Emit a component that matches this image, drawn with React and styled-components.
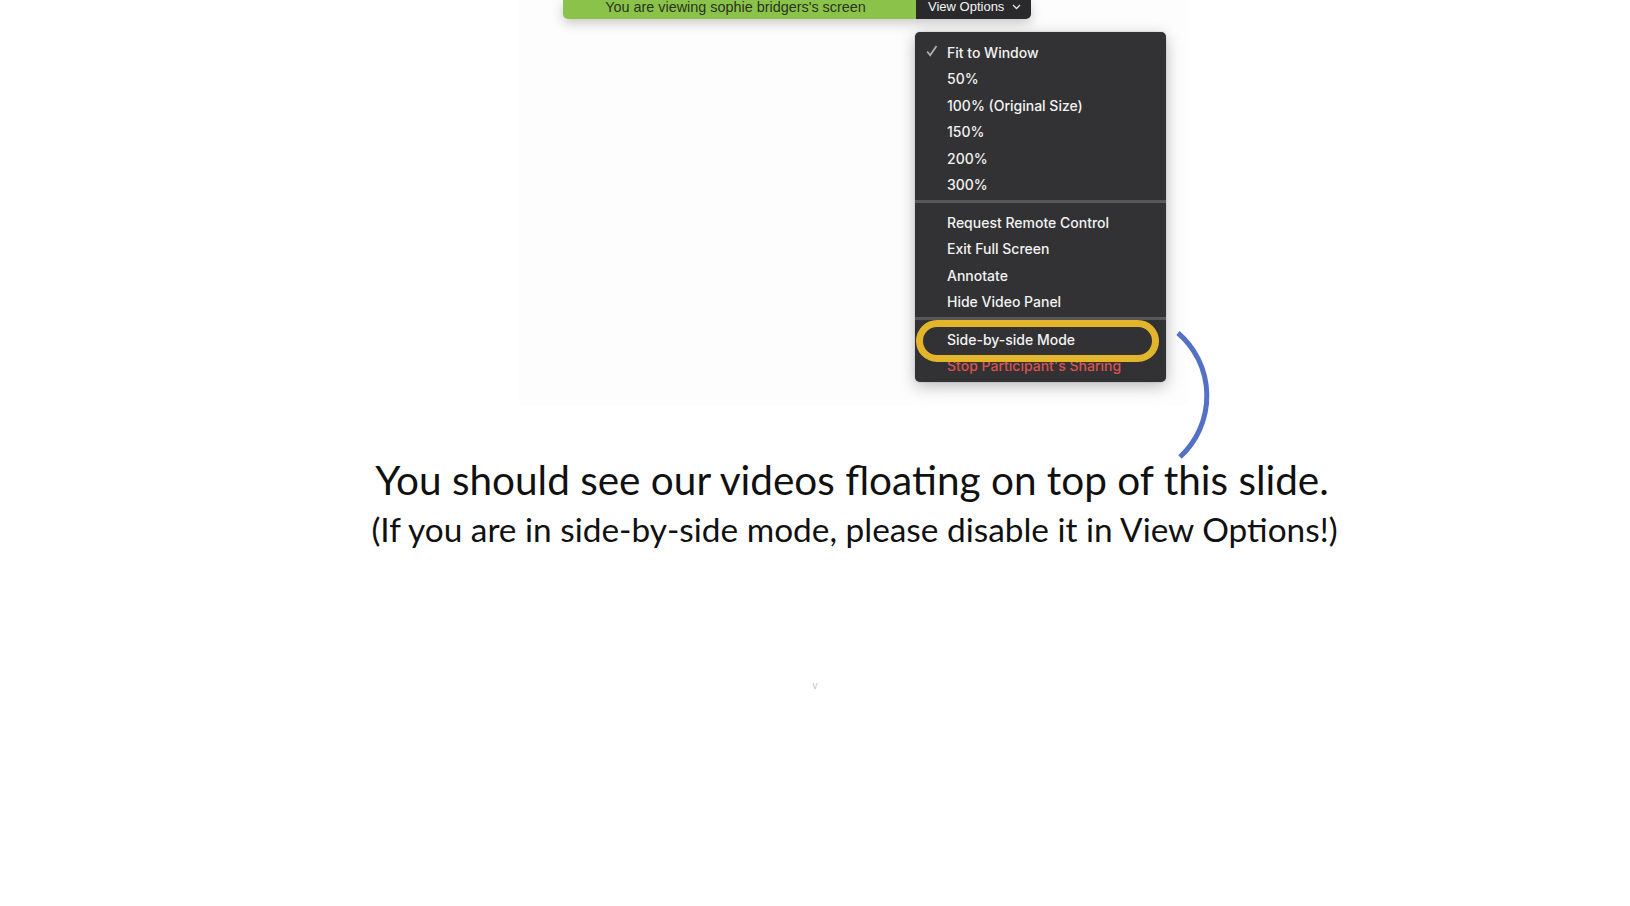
import React from 'react';
import styled, { createGlobalStyle } from 'styled-components';

const GlobalStyle = createGlobalStyle`
  html, body {
    margin: 0;
    padding: 0;
    background: #ffffff;
  }
`;

const Page = styled.div`
  position: relative;
  width: 1630px;
  height: 906px;
  overflow: hidden;
  background: #ffffff;
`;

const ShareWindow = styled.div`
  position: relative;
  margin-left: 519px;
  width: 669px;
  height: 405px;
  background: #fdfdfd;
`;

const Toolbar = styled.div`
  display: flex;
  margin-left: 44px;
  width: 468px;
  height: 19px;
  border-radius: 0 0 5px 5px;
  overflow: hidden;
  box-shadow: 0 4px 12px rgba(0, 0, 0, 0.22);
  font-family: "Liberation Sans", Arial, sans-serif;
`;

const Status = styled.div`
  display: flex;
  align-items: flex-end;
  justify-content: center;
  width: 353px;
  padding: 0 8px 5px 0;
  box-sizing: border-box;
  background: #8bc34a;
  color: #29331f;
  font-size: 14.4px;
  line-height: 14px;
  white-space: nowrap;
`;

const ViewButton = styled.div`
  display: flex;
  align-items: flex-end;
  gap: 8px;
  flex: 1;
  padding: 0 0 5px 12px;
  background: #2a2a2c;
  color: #f4f4f4;
  font-size: 13px;
  line-height: 14px;
  white-space: nowrap;
  svg {
    margin-bottom: 4px;
  }
`;

const Menu = styled.div`
  position: absolute;
  left: 396px;
  top: 32px;
  width: 251px;
  height: 350px;
  box-sizing: border-box;
  padding: 8px 0 3px;
  background: #323234;
  border-radius: 5px;
  box-shadow: 0 4px 16px rgba(0, 0, 0, 0.28), 0 0 1px rgba(0, 0, 0, 0.5);
  font-family: "Inter", "Liberation Sans", Arial, sans-serif;
`;

const Item = styled.div`
  position: relative;
  height: 26.4px;
  padding-left: 32px;
  line-height: 26.4px;
  font-size: 14px;
  font-weight: 500;
  color: ${(p) => (p.$danger ? '#d9534f' : '#f3f3f3')};
  white-space: nowrap;
`;

const Check = styled.svg`
  position: absolute;
  left: 11px;
  top: 5px;
`;

const Separator = styled.div`
  height: 3px;
  margin: 1.5px 0 7px;
  background: #58585b;
`;

const Highlight = styled.div`
  position: absolute;
  left: 1px;
  top: 288px;
  width: 243px;
  height: 42px;
  box-sizing: border-box;
  border: 7.5px solid #e3b52c;
  border-radius: 21px;
  pointer-events: none;
`;

const Arc = styled.svg`
  position: absolute;
  left: 1165px;
  top: 325px;
`;

const Slide = styled.section`
  padding-left: 74px;
  text-align: center;
  font-family: "Lato", "Noto Sans", sans-serif;
  color: #111111;
`;

const Headline = styled.div`
  margin-top: 51.3px;
  font-size: 40.5px;
  line-height: 48px;
`;

const Subline = styled.div`
  margin-top: 1.8px;
  padding-left: 5px;
  font-size: 33.4px;
  line-height: 46px;
`;

const ScrollHint = styled.div`
  margin-top: 129px;
  text-align: center;
  font-family: "Liberation Sans", Arial, sans-serif;
  font-size: 10px;
  line-height: 10px;
  color: #c4c4c4;
`;

const zoomItems = ['Fit to Window', '50%', '100% (Original Size)', '150%', '200%', '300%'];
const actionItems = ['Request Remote Control', 'Exit Full Screen', 'Annotate', 'Hide Video Panel'];

export default function App() {
  return (
    <Page>
      <GlobalStyle />
      <ShareWindow>
        <Toolbar>
          <Status>You are viewing sophie bridgers's screen</Status>
          <ViewButton>
            View Options
            <svg width="9" height="6" viewBox="0 0 9 6">
              <path d="M1 1 L4.5 4.5 L8 1" fill="none" stroke="#e6e6e6" strokeWidth="1.3" />
            </svg>
          </ViewButton>
        </Toolbar>
        <Menu>
          {zoomItems.map((label, i) => (
            <Item key={label}>
              {i === 0 && (
                <Check width="12" height="12" viewBox="0 0 12 12">
                  <path d="M1.2 6.5 L4.2 10.2 L10.5 1" fill="none" stroke="#b0b0b0" strokeWidth="1.8" />
                </Check>
              )}
              {label}
            </Item>
          ))}
          <Separator />
          {actionItems.map((label) => (
            <Item key={label}>{label}</Item>
          ))}
          <Separator />
          <Item>Side-by-side Mode</Item>
          <Item $danger>Stop Participant's Sharing</Item>
          <Highlight />
        </Menu>
      </ShareWindow>
      <Arc width="50" height="140" viewBox="0 0 50 140">
        <path d="M13 8 A 83 83 0 0 1 15 132" fill="none" stroke="#5571c5" strokeWidth="5" />
      </Arc>
      <Slide>
        <Headline>You should see our videos floating on top of this slide.</Headline>
        <Subline>(If you are in side-by-side mode, please disable it in View Options!)</Subline>
      </Slide>
      <ScrollHint>v</ScrollHint>
    </Page>
  );
}
